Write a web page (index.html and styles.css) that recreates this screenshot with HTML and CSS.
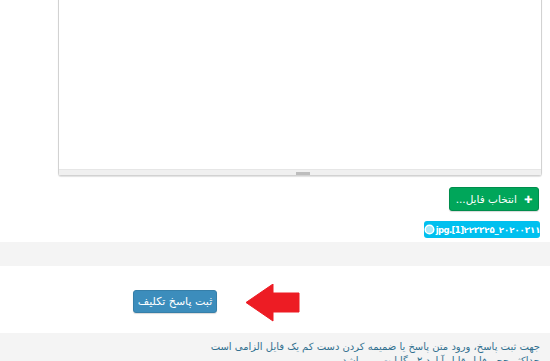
FILE: index.html
```html
<!DOCTYPE html>
<html lang="fa" dir="rtl">
<head>
    <meta charset="UTF-8">
    <meta name="viewport" content="width=device-width, initial-scale=1.0">
    <title>ثبت پاسخ تکلیف</title>
    <link rel="stylesheet" href="styles.css">
</head>
<body>
    <!-- Answer editor -->
    <div class="editor">
        <div class="editor-area"></div>
        <div class="editor-resize"><span class="grip"></span></div>
    </div>

    <!-- Attachments -->
    <div class="files">
        <button class="btn btn-success">
            <span class="plus">&#10010;</span>
            <span>انتخاب فایل...</span>
        </button>
        <div class="file-tag">
            <span class="file-name">jpg.[1]۲۲۳۳۲۵_۲۰۲۰۰۳۱۱</span>
            <svg class="file-icon" width="11" height="11" viewBox="0 0 11 11">
                <circle cx="5.5" cy="5.5" r="4.3" fill="#a9e8f8" stroke="#ffffff" stroke-width="1.5"/>
            </svg>
        </div>
    </div>

    <div class="band"></div>

    <!-- Submit -->
    <div class="submit-row">
        <button class="btn btn-primary">ثبت پاسخ تکلیف</button>
        <svg class="arrow" width="54" height="38" viewBox="0 0 54 38">
            <polygon points="0,18.5 27,0 27,9 53,9 53,28 27,28 27,37" fill="#ed1c24" stroke="#ed1c24" stroke-width="1" stroke-linejoin="round"/>
        </svg>
    </div>

    <div class="notes">
        <p>جهت ثبت پاسخ، ورود متن پاسخ یا ضمیمه کردن دست کم یک فایل الزامی است</p>
        <p>حداکثر حجم فایل قابل آپلود ۲ مگابایت می باشد</p>
    </div>
</body>
</html>
```

FILE: styles.css
```css
body {
    margin: 0;
    padding: 0;
    font-family: 'DejaVu Sans', sans-serif;
    background: #fff;
    color: #333;
    overflow: hidden;
}

/* Editor box (top is scrolled out of view) */
.editor {
    margin: -14px 8px 0 58px;
    height: 190px;
    box-sizing: border-box;
    border: 1px solid #d2d2d2;
    border-radius: 3px;
    box-shadow: 0 1px 1px rgba(0, 0, 0, 0.12);
    display: flex;
    flex-direction: column;
    background: #fff;
}

.editor-area {
    flex: 1;
}

.editor-resize {
    height: 5px;
    background: #f0f0f0;
    border-top: 1px solid #e6e6e6;
    display: flex;
    justify-content: center;
    align-items: flex-end;
    direction: ltr;
}

.grip {
    width: 14px;
    height: 3px;
    background: #bdbdbd;
    margin-left: 6px;
}

/* Attachments */
.files {
    display: flex;
    flex-direction: column;
    align-items: flex-start;
    padding-right: 10px;
}

.btn {
    font-family: 'DejaVu Sans', sans-serif;
    border: 1px solid transparent;
    border-radius: 3px;
    color: #fff;
    font-size: 10.5px;
    cursor: pointer;
    box-shadow: 0 1px 1px rgba(0, 0, 0, 0.15);
}

.btn-success {
    margin-top: 11px;
    margin-right: 1px;
    width: 90px;
    height: 24px;
    background-color: #00a65a;
    border-color: #008d4c;
    display: flex;
    align-items: center;
    justify-content: center;
    gap: 7px;
    padding: 0;
}

.plus {
    font-size: 10px;
    font-weight: bold;
}

.file-tag {
    margin-top: 10px;
    width: 116px;
    height: 17px;
    box-sizing: border-box;
    background-color: #00c0ef;
    border-radius: 3px;
    color: #fff;
    display: flex;
    align-items: center;
    justify-content: center;
    gap: 1px;
    padding: 0 2px;
    overflow: hidden;
}

.file-icon {
    flex-shrink: 0;
}

.file-name {
    direction: ltr;
    unicode-bidi: bidi-override;
    font-size: 8.5px;
    font-weight: bold;
    white-space: nowrap;
    letter-spacing: -0.6px;
}

.band {
    margin-top: 4px;
    height: 24px;
    background: #f4f4f4;
}

/* Submit row */
.submit-row {
    direction: ltr;
    height: 67px;
    box-sizing: border-box;
    padding: 18px 0 0 133px;
    display: flex;
    align-items: flex-start;
    gap: 29px;
}

.btn-primary {
    margin-top: 6px;
    width: 84px;
    height: 23px;
    padding: 0;
    background-color: #3c8dbc;
    border-color: #367fa9;
    direction: rtl;
    font-size: 11px;
}

.notes {
    background: #f4f4f4;
    padding: 7px 10px 4px;
    height: 40px;
}

.notes p {
    margin: 0;
    font-size: 10px;
    line-height: 14px;
    color: #31708f;
}
```
